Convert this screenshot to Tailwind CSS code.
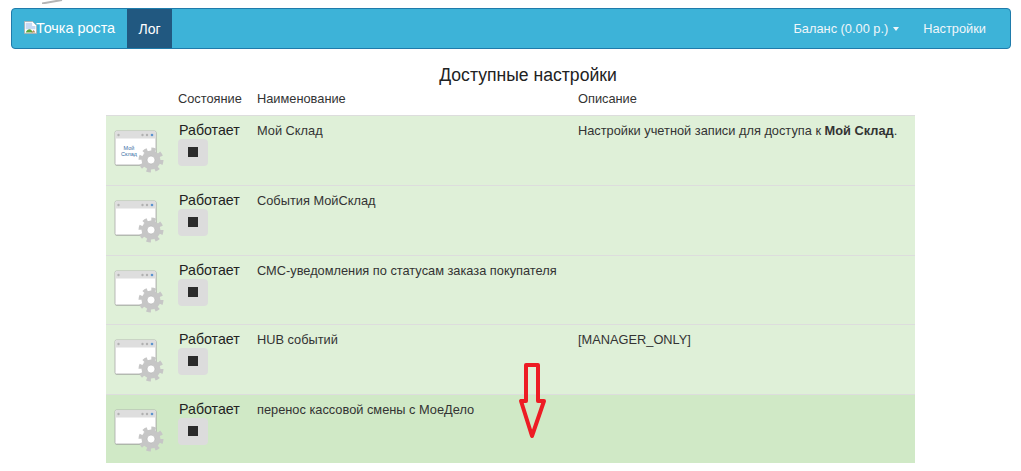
<!DOCTYPE html>
<html lang="ru">

<head>
    <meta charset="UTF-8">
    <title>Доступные настройки</title>
    <script src="https://cdn.jsdelivr.net/npm/@tailwindcss/browser@4"></script>
</head>

<body class="relative h-[471px] overflow-hidden bg-white font-['Liberation_Sans',sans-serif] text-[#333]">
    <svg class="hidden">
        <symbol id="app-icon" viewBox="0 0 52 46">
            <rect x="1.5" y="2" width="41" height="34" rx="1" fill="#777" opacity=".35"/>
            <rect x="1" y="1" width="41" height="34" rx="1.5" fill="#fff" stroke="#a8a8a8" stroke-width=".8"/>
            <rect x="1.5" y="1.5" width="40" height="7" fill="#dedede"/>
            <circle cx="4.5" cy="5" r="1.2" fill="#b0b0b0"/>
            <circle cx="28.5" cy="5" r="1.2" fill="#b0b0b0"/>
            <circle cx="33" cy="5" r="1.2" fill="#b0b0b0"/>
            <circle cx="38" cy="5" r="1.3" fill="#5b94cf"/>
            <circle cx="37" cy="30" r="10.5" fill="none" stroke="#c6c6c6" stroke-width="4" stroke-dasharray="4.2 4.05"/>
            <circle cx="37" cy="30" r="9.5" fill="#c6c6c6"/>
            <circle cx="37" cy="30" r="4" fill="#fff" stroke="#b0b0b0" stroke-width=".6"/>
        </symbol>
    </svg>

    <!-- scrap of the picture above the navbar -->
    <svg class="absolute left-[42px] top-0" width="21" height="4"><path d="M0 3.5 20 0" stroke="#b5b5b5" stroke-width="2"/></svg>

    <div class="px-[11px] pt-2">
        <nav class="flex h-[41px] w-[1000px] items-stretch rounded border border-[#1f7bab] bg-[#3db3d8] text-[12.8px] text-[#f0f6fa]">
            <a href="#" class="flex w-[115px] items-center pl-3 text-[14.4px] text-white">
                <svg width="13" height="13" viewBox="0 0 16 16" class="-mt-[3px] shrink-0">
                    <path d="M.5.5h10l5 5v10H.5z" fill="#fff" stroke="#a8a8a8"/>
                    <path d="M2 2h8v4h4v4H2z" fill="#c5d9f3"/>
                    <path d="M2 14c2-4 5-5 7-3l2 3z" fill="#5aa53c"/>
                    <path d="M9 14l3-3 2 3z" fill="#b58a5a"/>
                </svg>
                <span class="-ml-px">Точка роста</span>
            </a>
            <a href="#" class="flex w-[45px] items-center justify-center bg-[#215880] text-sm text-white">Лог</a>
            <div class="ml-auto flex items-center pr-6">
                <a href="#" class="flex items-center">
                    Баланс (0.00 р.)
                    <span class="ml-[5px] mt-px h-0 w-0 border-x-[3.5px] border-t-[4px] border-x-transparent border-t-[#f0f6fa]"></span>
                </a>
                <a href="#" class="ml-6">Настройки</a>
            </div>
        </nav>

        <h2 class="mt-[17px] pl-[35px] text-center text-[17.6px] leading-[18px] text-[#222]">Доступные настройки</h2>

        <table class="ml-[95px] mt-[7px] w-[809px] table-fixed border-collapse">
            <thead>
                <tr class="h-[24px] align-top text-[12.8px] leading-4">
                    <th class="w-[72px]"></th>
                    <th class="w-[79px] text-left font-normal">Состояние</th>
                    <th class="w-[321px] text-left font-normal">Наименование</th>
                    <th class="text-left font-normal">Описание</th>
                </tr>
            </thead>
            <tbody class="align-top text-[12.8px]">
                <tr class="h-[70px] border-t border-[#ddd] bg-[#dff0d8]">
                    <td class="pl-2 pt-[14px]">
                        <div class="relative h-[46px] w-[52px]">
                            <svg width="52" height="46"><use href="#app-icon"/></svg>
                            <div class="absolute left-[5px] top-[15px] w-[20px] text-center text-[5.5px] leading-[6px] text-[#3a6ea5]">Мой Склад</div>
                        </div>
                    </td>
                    <td class="pt-[6px]">
                        <div class="pl-px text-[14.2px] leading-4 text-[#222]">Работает</div>
                        <button class="mt-px flex h-[27px] w-[30px] items-center justify-center rounded bg-[#dcdcdc]"><span class="h-[10px] w-[10px] bg-[#2b2b2b]"></span></button>
                    </td>
                    <td class="pt-[7px] leading-4">Мой Склад</td>
                    <td class="pt-[7px] leading-4">Настройки учетной записи для доступа к <b>Мой Склад</b>.</td>
                </tr>
                <tr class="h-[70px] border-t border-[#ddd] bg-[#dff0d8]">
                    <td class="pl-2 pt-[14px]">
                        <svg width="52" height="46"><use href="#app-icon"/></svg>
                    </td>
                    <td class="pt-[6px]">
                        <div class="pl-px text-[14.2px] leading-4 text-[#222]">Работает</div>
                        <button class="mt-px flex h-[27px] w-[30px] items-center justify-center rounded bg-[#dcdcdc]"><span class="h-[10px] w-[10px] bg-[#2b2b2b]"></span></button>
                    </td>
                    <td class="pt-[7px] leading-4">События МойСклад</td>
                    <td></td>
                </tr>
                <tr class="h-[69px] border-t border-[#ddd] bg-[#dff0d8]">
                    <td class="pl-2 pt-[14px]">
                        <svg width="52" height="46"><use href="#app-icon"/></svg>
                    </td>
                    <td class="pt-[6px]">
                        <div class="pl-px text-[14.2px] leading-4 text-[#222]">Работает</div>
                        <button class="mt-px flex h-[27px] w-[30px] items-center justify-center rounded bg-[#dcdcdc]"><span class="h-[10px] w-[10px] bg-[#2b2b2b]"></span></button>
                    </td>
                    <td class="pt-[7px] leading-4">СМС-уведомления по статусам заказа покупателя</td>
                    <td></td>
                </tr>
                <tr class="h-[70px] border-t border-[#ddd] bg-[#dff0d8]">
                    <td class="pl-2 pt-[14px]">
                        <svg width="52" height="46"><use href="#app-icon"/></svg>
                    </td>
                    <td class="pt-[6px]">
                        <div class="pl-px text-[14.2px] leading-4 text-[#222]">Работает</div>
                        <button class="mt-px flex h-[27px] w-[30px] items-center justify-center rounded bg-[#dcdcdc]"><span class="h-[10px] w-[10px] bg-[#2b2b2b]"></span></button>
                    </td>
                    <td class="pt-[7px] leading-4">HUB событий</td>
                    <td class="pt-[7px] leading-4">[MANAGER_ONLY]</td>
                </tr>
                <tr class="h-[69px] border-t border-[#ddd] bg-[#d0e9c6]">
                    <td class="pl-2 pt-[14px]">
                        <svg width="52" height="46"><use href="#app-icon"/></svg>
                    </td>
                    <td class="pt-[6px]">
                        <div class="pl-px text-[14.2px] leading-4 text-[#222]">Работает</div>
                        <button class="mt-px flex h-[27px] w-[30px] items-center justify-center rounded bg-[#dcdcdc]"><span class="h-[10px] w-[10px] bg-[#2b2b2b]"></span></button>
                    </td>
                    <td class="pt-[7px] leading-4">перенос кассовой смены с МоеДело</td>
                    <td></td>
                </tr>
            </tbody>
        </table>
    </div>

    <!-- red annotation arrow drawn over the table -->
    <svg class="absolute left-[518px] top-[362px]" width="30" height="78" viewBox="0 0 30 78" fill="none">
        <path d="M8 3h12v36h6L14 74 3 39h5z" stroke="#ed1c24" stroke-width="4" stroke-linejoin="round"/>
    </svg>
</body>

</html>
